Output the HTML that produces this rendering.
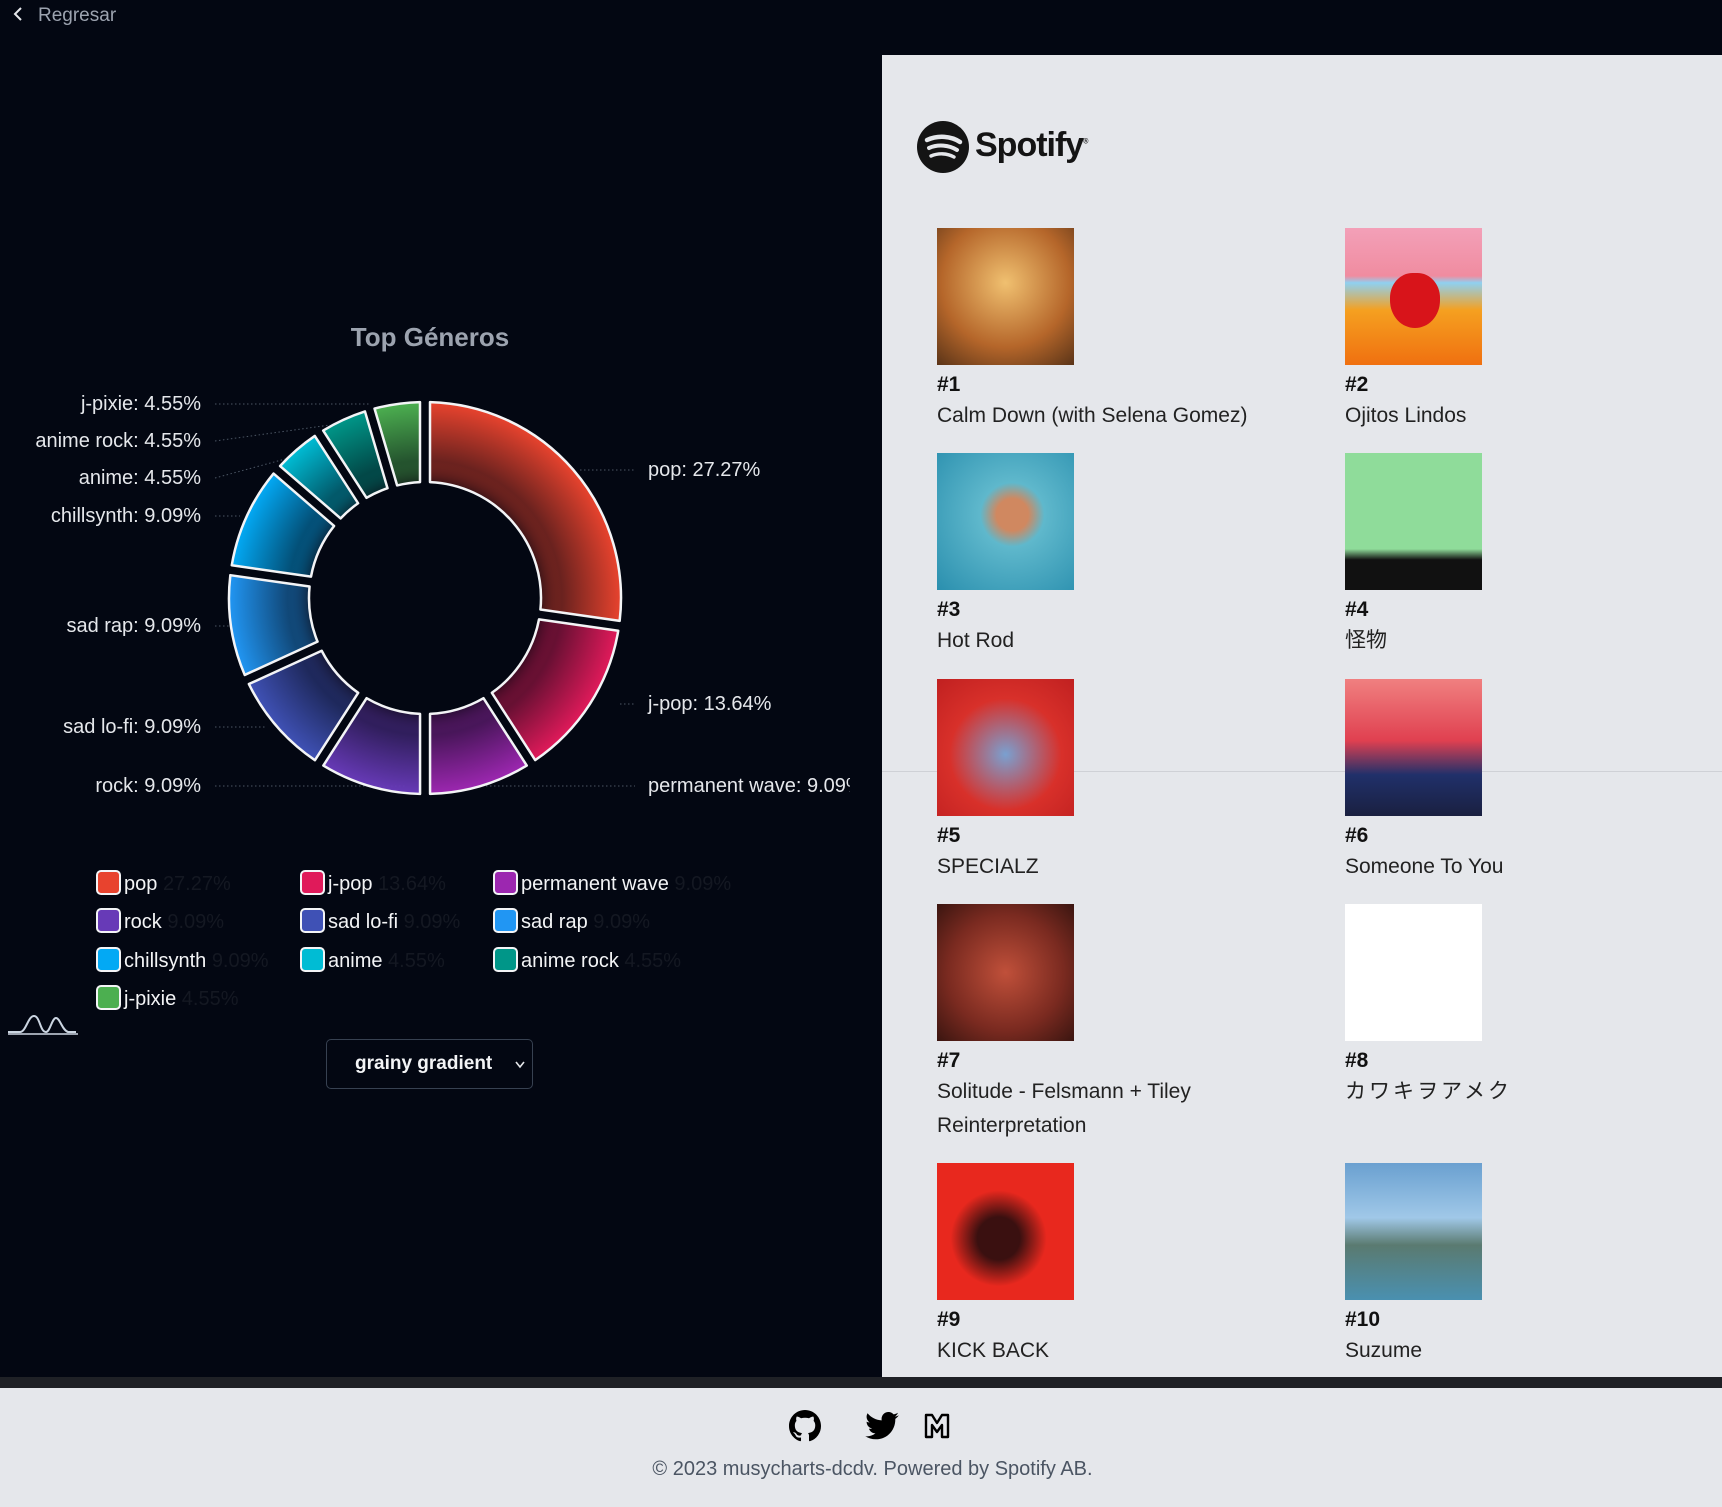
<!DOCTYPE html>
<html><head><meta charset="utf-8"><style>
*{margin:0;padding:0;box-sizing:border-box}
body{width:1722px;height:1507px;background:#030712;font-family:"Liberation Sans","Noto Sans CJK JP",sans-serif;position:relative;overflow:hidden}
.abs{position:absolute}
#back{left:12px;top:4px;color:#9ca3af;font-size:19px;line-height:24px}
#panel{left:882px;top:55px;width:840px;height:1322px;background:#e5e7eb}
#strip{left:0;top:1377px;width:1722px;height:11px;background:#1f2126}
#footer{left:0;top:1388px;width:1722px;height:119px;background:#e5e7eb}
.lbl{position:absolute;color:#e5e7eb;font-size:20px;line-height:24px;white-space:nowrap}
.l{text-align:right;right:1521px}
.leg{position:absolute;color:#f3f4f6;font-size:20px;line-height:26px;white-space:nowrap}
.leg i{display:inline-block;width:25px;height:25px;border:2px solid #f3f4f6;border-radius:5px;vertical-align:-5px;margin-right:3px}
.leg span{color:#141822}
.card{position:absolute;width:400px}
.card .img{width:137px;height:137px}
.card b{display:block;font-size:21px;margin-top:6px;color:#111;line-height:28px}
.card p{font-size:21px;color:#222;line-height:34px}
</style></head><body>
<div id="back" class="abs"><svg width="14" height="16" viewBox="0 0 14 16" style="vertical-align:-1px;margin-right:12px"><path d="M9 2 L3 8 L9 14" stroke="#e5e7eb" stroke-width="2" fill="none"/></svg>Regresar</div>

<div class="abs" style="left:0;top:322px;width:860px;text-align:center;color:#9ca3af;font-weight:bold;font-size:26px">Top Géneros</div>
<svg class="abs" style="left:0;top:0" width="880" height="900" id="chart">
<defs></defs>
</svg>
<div class="lbl l" style="top:392px">j-pixie: 4.55%</div>
<div class="lbl l" style="top:429px">anime rock: 4.55%</div>
<div class="lbl l" style="top:466px">anime: 4.55%</div>
<div class="lbl l" style="top:504px">chillsynth: 9.09%</div>
<div class="lbl l" style="top:614px">sad rap: 9.09%</div>
<div class="lbl l" style="top:715px">sad lo-fi: 9.09%</div>
<div class="lbl l" style="top:774px">rock: 9.09%</div>
<div class="lbl" style="left:648px;top:458px">pop: 27.27%</div>
<div class="lbl" style="left:648px;top:692px">j-pop: 13.64%</div>
<div class="lbl" style="left:648px;top:774px;width:202px;overflow:hidden">permanent wave: 9.09%</div>

<div class="leg" style="left:96px;top:870px"><i style="background:#e8432e"></i>pop <span>27.27%</span></div>
<div class="leg" style="left:300px;top:870px"><i style="background:#e01a5a"></i>j-pop <span>13.64%</span></div>
<div class="leg" style="left:493px;top:870px"><i style="background:#9c27b0"></i>permanent wave <span>9.09%</span></div>
<div class="leg" style="left:96px;top:908px"><i style="background:#673ab7"></i>rock <span>9.09%</span></div>
<div class="leg" style="left:300px;top:908px"><i style="background:#3f51b5"></i>sad lo-fi <span>9.09%</span></div>
<div class="leg" style="left:493px;top:908px"><i style="background:#2196f3"></i>sad rap <span>9.09%</span></div>
<div class="leg" style="left:96px;top:947px"><i style="background:#03a9f4"></i>chillsynth <span>9.09%</span></div>
<div class="leg" style="left:300px;top:947px"><i style="background:#00bcd4"></i>anime <span>4.55%</span></div>
<div class="leg" style="left:493px;top:947px"><i style="background:#009688"></i>anime rock <span>4.55%</span></div>
<div class="leg" style="left:96px;top:985px"><i style="background:#4caf50"></i>j-pixie <span>4.55%</span></div>

<svg class="abs" style="left:6px;top:1010px" width="72" height="26"><path d="M2 22 L14 22 C20 22 22 6 28 6 C34 6 34 22 40 22 C44 22 46 8 50 8 C54 8 56 20 62 22 L70 22" stroke="#cbd5e1" stroke-width="2" fill="none"/><path d="M2 24 L72 24" stroke="#9ca3af" stroke-width="2"/></svg>

<div class="abs" style="left:326px;top:1039px;width:207px;height:50px;border:1px solid #374151;border-radius:5px;color:#f3f4f6;font-weight:bold;font-size:19px;line-height:48px;padding-left:28px">grainy gradient<svg width="12" height="10" style="position:absolute;right:6px;top:20px"><path d="M2 2 L6 7 L10 2" stroke="#e5e7eb" stroke-width="1.6" fill="none"/></svg></div>

<div id="panel" class="abs"></div>
<div class="abs" style="left:882px;top:771px;width:840px;height:1px;background:#cfd1d6"></div>
<svg class="abs" style="left:916px;top:120px" width="54" height="54" viewBox="0 0 54 54"><circle cx="27" cy="27" r="26" fill="#141414"/><path d="M11 20 C22 15 35 16 44 22" stroke="#e5e7eb" stroke-width="4.5" fill="none" stroke-linecap="round"/><path d="M13 28 C22 24 33 25 41 30" stroke="#e5e7eb" stroke-width="4" fill="none" stroke-linecap="round"/><path d="M15 36 C22 33 31 33 38 37" stroke="#e5e7eb" stroke-width="3.4" fill="none" stroke-linecap="round"/></svg>
<div class="abs" style="left:975px;top:126px;font-size:34px;font-weight:bold;color:#141414;letter-spacing:-1px">Spotify<sup style="font-size:7px">®</sup></div>

<div class="card" style="left:937px;top:228px"><div class="img" style="background:radial-gradient(circle at 50% 40%,#f0c070,#b5662a 60%,#5a3418)"></div><b>#1</b><p>Calm Down (with Selena Gomez)</p></div>
<div class="card" style="left:1345px;top:228px"><div class="img" style="background:linear-gradient(#f3a0b8 0%,#f08ca0 35%,#8fd0f0 40%,#f5a020 60%,#f07010 100%)"><div style="position:relative;left:45px;top:45px;width:50px;height:55px;background:#d8141a;border-radius:45% 45% 50% 50%"></div></div><b>#2</b><p>Ojitos Lindos</p></div>
<div class="card" style="left:937px;top:453px"><div class="img" style="background:radial-gradient(circle at 55% 45%,#d08860 0 15%,#5fb8cc 30%,#2a8fae)"></div><b>#3</b><p>Hot Rod</p></div>
<div class="card" style="left:1345px;top:453px"><div class="img" style="background:linear-gradient(#8fdc9a 0 70%,#111 78%,#111)"></div><b>#4</b><p>怪物</p></div>
<div class="card" style="left:937px;top:679px"><div class="img" style="background:radial-gradient(circle at 50% 55%,#7aa0d0,#d8302a 55%,#c02020)"></div><b>#5</b><p>SPECIALZ</p></div>
<div class="card" style="left:1345px;top:679px"><div class="img" style="background:linear-gradient(#f08080,#e04050 45%,#20306a 70%,#1a2040)"></div><b>#6</b><p>Someone To You</p></div>
<div class="card" style="left:937px;top:904px"><div class="img" style="background:radial-gradient(circle,#c0503a,#7a2a20 60%,#3a1510)"></div><b>#7</b><p>Solitude - Felsmann + Tiley Reinterpretation</p></div>
<div class="card" style="left:1345px;top:904px"><div class="img" style="background:#fff"></div><b>#8</b><p style="letter-spacing:3px">カワキヲアメク</p></div>
<div class="card" style="left:937px;top:1163px"><div class="img" style="background:radial-gradient(circle at 45% 55%,#3a1010 0 20%,#e8281e 45%)"></div><b>#9</b><p>KICK BACK</p></div>
<div class="card" style="left:1345px;top:1163px"><div class="img" style="background:linear-gradient(#6aa0d0,#a0c8e8 40%,#5a7a70 60%,#4a90b0)"></div><b>#10</b><p>Suzume</p></div>

<div id="strip" class="abs"></div>
<div id="footer" class="abs"></div>
<svg class="abs" style="left:789px;top:1410px" width="32" height="32" viewBox="0 0 16 16"><path fill="#000" d="M8 0C3.58 0 0 3.580 0 8c0 3.540 2.290 6.530 5.470 7.590.4.07.55-.17.55-.38 0-.19-.01-.82-.01-1.490-2.010.37-2.530-.49-2.690-.94-.09-.23-.48-.94-.82-1.130-.28-.15-.68-.52-.01-.53.63-.01 1.080.58 1.230.82.72 1.210 1.870.87 2.330.66.07-.52.28-.87.51-1.070-1.780-.2-3.640-.89-3.640-3.950 0-.87.31-1.590.82-2.150-.08-.2-.36-1.020.08-2.120 0 0 .67-.21 2.200.82.64-.18 1.320-.27 2-.27.68 0 1.360.09 2 .27 1.530-1.040 2.200-.82 2.200-.82.44 1.100.16 1.920.08 2.120.51.56.82 1.270.82 2.150 0 3.070-1.870 3.750-3.650 3.950.29.25.54.73.54 1.480 0 1.070-.01 1.930-.01 2.200 0 .21.15.46.55.38A8.013 8.013 0 0016 8c0-4.420-3.580-8-8-8z"/></svg>
<svg class="abs" style="left:865px;top:1412px" width="34" height="28" viewBox="0 0 24 20"><path fill="#000" d="M24 2.4c-.9.4-1.8.7-2.8.8 1-.6 1.8-1.6 2.2-2.7-1 .6-2 1-3.1 1.2C19.4.7 18.1 0 16.6 0c-2.7 0-4.9 2.2-4.9 4.9 0 .4 0 .8.1 1.1C7.7 5.8 4.1 3.9 1.7.9c-.4.7-.7 1.6-.7 2.5 0 1.7.9 3.2 2.2 4.1-.8 0-1.6-.2-2.2-.6v.1c0 2.4 1.7 4.4 3.9 4.8-.4.1-.8.2-1.3.2-.3 0-.6 0-.9-.1.6 2 2.4 3.4 4.6 3.4-1.7 1.3-3.8 2.1-6.1 2.1-.4 0-.8 0-1.2-.1 2.2 1.4 4.8 2.2 7.5 2.2 9.1 0 14-7.5 14-14v-.6c1-.7 1.8-1.6 2.5-2.5z"/></svg>
<svg class="abs" style="left:923px;top:1412px" width="28" height="28" viewBox="0 0 28 28"><path d="M3 3 H9 L14 11 L19 3 H25 V25 H19 V13 L14 20 L9 13 V25 H3 Z" fill="none" stroke="#000" stroke-width="2.4" stroke-linejoin="round"/></svg>
<div class="abs" style="left:0;top:1458px;width:1745px;text-align:center;color:#4b5563;font-size:20px">© 2023 musycharts-dcdv. Powered by Spotify AB.</div>

<script>
(function(){
var svg=document.getElementById('chart'),NS='http://www.w3.org/2000/svg';
var cx=425,cy=598,R=196,r=116;
var data=[["#e8432e",27.27],["#e01a5a",13.64],["#9c27b0",9.09],["#673ab7",9.09],["#3f51b5",9.09],["#2196f3",9.09],["#03a9f4",9.09],["#00bcd4",4.55],["#009688",4.55],["#4caf50",4.55]];
var tot=0;data.forEach(function(d){tot+=d[1]});
var defs=svg.querySelector('defs');
function pt(rad,a){return [cx+rad*Math.sin(a),cy-rad*Math.cos(a)];}
var a0=0;
data.forEach(function(d,i){
 var a1=a0+d[1]/tot*2*Math.PI;
 var g=document.createElementNS(NS,'radialGradient');
 g.setAttribute('id','g'+i);g.setAttribute('gradientUnits','userSpaceOnUse');
 g.setAttribute('cx',cx);g.setAttribute('cy',cy);g.setAttribute('r',R);
 g.innerHTML='<stop offset="0.55" stop-color="#0a0610"/><stop offset="0.7" stop-color="'+d[0]+'" stop-opacity="0.45"/><stop offset="1" stop-color="'+d[0]+'"/>';
 defs.appendChild(g);
 var h=5;
 var s=a0+h/R,e=a1-h/R,si=a0+h/r,ei=a1-h/r;
 var p1=pt(R,s),p2=pt(R,e),p3=pt(r,ei),p4=pt(r,si);
 var lg=(e-s)>Math.PI?1:0;
 var dd='M'+p1+' A'+R+' '+R+' 0 '+lg+' 1 '+p2+' L'+p3+' A'+r+' '+r+' 0 '+lg+' 0 '+p4+' Z';
 var p=document.createElementNS(NS,'path');
 p.setAttribute('d',dd);p.setAttribute('fill','url(#g'+i+')');
 p.setAttribute('stroke','#f3f4f6');p.setAttribute('stroke-width','2.5');p.setAttribute('stroke-linejoin','round');
 svg.appendChild(p);
 a0=a1;
});
var lines=[[215,404,370,404],[215,441,330,425],[215,478,300,455],[215,516,240,516],[215,626,232,626],[215,727,265,727],[215,786,405,786],[580,470,635,470],[620,704,635,704],[470,786,635,786]];
lines.forEach(function(l){var ln=document.createElementNS(NS,'line');ln.setAttribute('x1',l[0]);ln.setAttribute('y1',l[1]);ln.setAttribute('x2',l[2]);ln.setAttribute('y2',l[3]);ln.setAttribute('stroke','#4b5563');ln.setAttribute('stroke-dasharray','1.5 2.5');svg.insertBefore(ln,svg.firstChild.nextSibling);});
})();
</script>
</body></html>
